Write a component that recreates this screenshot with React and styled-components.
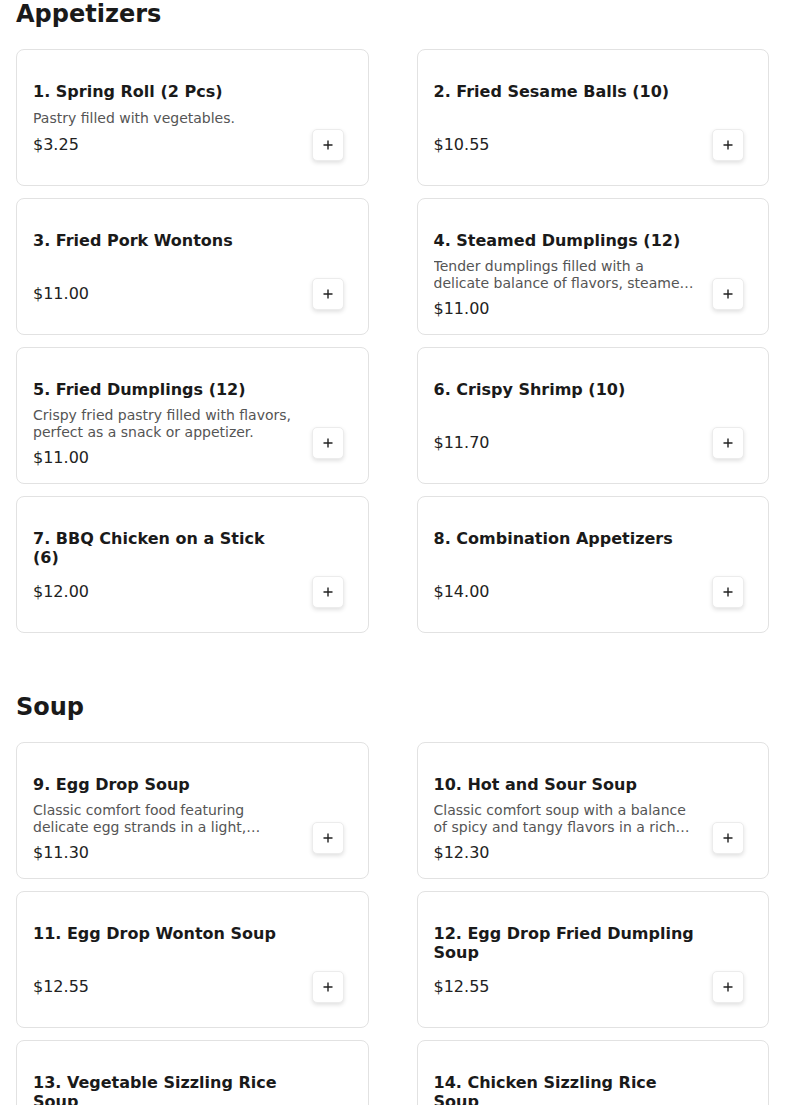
import React from "react";
import styled, { createGlobalStyle } from "styled-components";

const GlobalStyle = createGlobalStyle`
  body {
    margin: 0;
    background: #ffffff;
    font-family: "DejaVu Sans", "Liberation Sans", sans-serif;
    color: #1a1a1a;
  }
`;

const menu = [
  {
    name: "Appetizers",
    items: [
      { title: "1. Spring Roll (2 Pcs)", desc: "Pastry filled with vegetables.", price: "$3.25" },
      { title: "2. Fried Sesame Balls (10)", price: "$10.55" },
      { title: "3. Fried Pork Wontons", price: "$11.00" },
      {
        title: "4. Steamed Dumplings (12)",
        desc: "Tender dumplings filled with a delicate balance of flavors, steamed to perfection.",
        price: "$11.00",
      },
      {
        title: "5. Fried Dumplings (12)",
        desc: "Crispy fried pastry filled with flavors, perfect as a snack or appetizer.",
        price: "$11.00",
      },
      { title: "6. Crispy Shrimp (10)", price: "$11.70" },
      { title: "7. BBQ Chicken on a Stick (6)", price: "$12.00" },
      { title: "8. Combination Appetizers", price: "$14.00" },
    ],
  },
  {
    name: "Soup",
    items: [
      {
        title: "9. Egg Drop Soup",
        desc: "Classic comfort food featuring delicate egg strands in a light, savory broth.",
        price: "$11.30",
      },
      {
        title: "10. Hot and Sour Soup",
        desc: "Classic comfort soup with a balance of spicy and tangy flavors in a rich broth.",
        price: "$12.30",
      },
      { title: "11. Egg Drop Wonton Soup", price: "$12.55" },
      { title: "12. Egg Drop Fried Dumpling Soup", price: "$12.55" },
      { title: "13. Vegetable Sizzling Rice Soup", price: "$12.55" },
      { title: "14. Chicken Sizzling Rice Soup", price: "$12.55" },
    ],
  },
];

const Page = styled.div`
  padding: 0 16px;
`;

const Section = styled.section`
  & + & {
    margin-top: 60px;
  }
`;

const SectionTitle = styled.h2`
  margin: 0 0 21px;
  font-size: 24px;
  line-height: 28px;
  font-weight: 700;
  color: #1a1a1a;
`;

const Grid = styled.div`
  display: grid;
  grid-template-columns: 1fr 1fr;
  column-gap: 48px;
  row-gap: 12px;
`;

const Card = styled.div`
  box-sizing: border-box;
  height: 137px;
  display: flex;
  align-items: flex-end;
  gap: 16px;
  padding: 32px 24px 24px 16px;
  border: 1px solid #e2e2e2;
  border-radius: 8px;
  background: #fff;
`;

const Info = styled.div`
  flex: 1;
  min-width: 0;
  align-self: flex-start;
  height: 72px;
  display: flex;
  flex-direction: column;
  justify-content: space-between;
  gap: 7px;
`;

const Title = styled.div`
  font-size: 16px;
  line-height: 19px;
  font-weight: 700;
  color: #1a1a1a;
`;

const Desc = styled.div`
  margin-top: 1px;
  font-size: 14px;
  line-height: 17px;
  color: #555;
  display: -webkit-box;
  -webkit-line-clamp: 2;
  -webkit-box-orient: vertical;
  overflow: hidden;
  flex-shrink: 0;
`;

const Price = styled.div`
  font-size: 16px;
  line-height: 19px;
  color: #222;
  flex-shrink: 0;
`;

const AddButton = styled.button`
  flex-shrink: 0;
  width: 32px;
  height: 32px;
  padding: 0;
  display: flex;
  align-items: center;
  justify-content: center;
  border: 1px solid #ececec;
  border-radius: 5px;
  background: #fff;
  color: #222;
  box-shadow: 0 2px 4px rgba(0, 0, 0, 0.12);
  cursor: pointer;
`;

const PlusIcon = () => (
  <svg width="12" height="12" viewBox="0 0 12 12">
    <path d="M6 1.5v9M1.5 6h9" stroke="#222" strokeWidth="1.4" />
  </svg>
);

const MenuCard = ({ item }) => (
  <Card>
    <Info>
      <Title>{item.title}</Title>
      {item.desc && <Desc>{item.desc}</Desc>}
      <Price>{item.price}</Price>
    </Info>
    <AddButton aria-label={`Add ${item.title}`}>
      <PlusIcon />
    </AddButton>
  </Card>
);

const App = () => (
  <>
    <GlobalStyle />
    <Page>
      {menu.map((section) => (
        <Section key={section.name}>
          <SectionTitle>{section.name}</SectionTitle>
          <Grid>
            {section.items.map((item) => (
              <MenuCard key={item.title} item={item} />
            ))}
          </Grid>
        </Section>
      ))}
    </Page>
  </>
);

export default App;
